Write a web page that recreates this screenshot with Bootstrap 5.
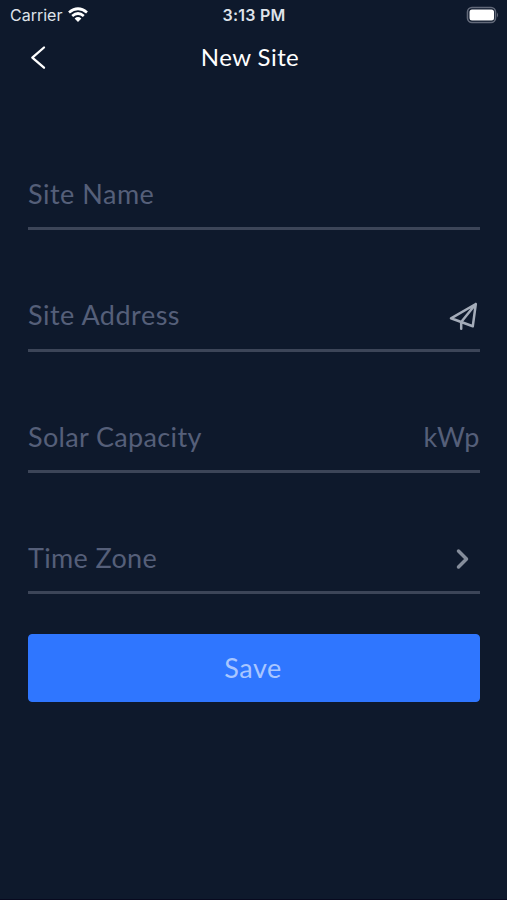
<!DOCTYPE html>
<html lang="en">
<head>
<meta charset="utf-8">
<meta name="viewport" content="width=device-width, initial-scale=1">
<title>New Site</title>
<link href="https://cdn.jsdelivr.net/npm/bootstrap@5.3.0/dist/css/bootstrap.min.css" rel="stylesheet">
<style>
body { background: #0e192c; font-family: Lato, sans-serif; color: #fff; }
.screen { height: 900px; border-bottom: 1px solid #08091f; }
.status-bar { height: 30px; padding: 0 8px 0 10px; font-family: Inter, sans-serif; font-size: 16px; line-height: 30px; color: #dfe3ea; }
.status-bar > div { flex: 1 1 0; }
.wifi { margin-left: 5px; }
.clock { font-weight: 600; letter-spacing: .25px; margin-left: -1px; }
.title-bar { height: 53px; padding: 0 35px 0 28px; }
.title-bar h1 { font-size: 24px; letter-spacing: .45px; line-height: 53px; }
.side { width: 20px; }
.site-form { padding: 63px 27px 0 28px; }
.field { height: 84.3px; margin-bottom: 37px; border-bottom: 3px solid #3c4558; font-size: 27px; color: #555f79; }
.field label { letter-spacing: .5px; line-height: 40px; margin-top: 15px; }
.field label.snug { letter-spacing: .35px; }
.save-btn { height: 68px; margin-top: 3px; border-radius: 4px; font-size: 27px; letter-spacing: .5px; padding-right: 14px; --bs-btn-bg: #2f76ff; --bs-btn-border-color: #2f76ff; --bs-btn-color: #a9c6ff; --bs-btn-padding-y: 0; }
</style>
<script src="https://cdn.jsdelivr.net/npm/bootstrap@5.3.0/dist/js/bootstrap.bundle.min.js"></script>
</head>
<body>
<div class="screen">
  <header>
    <div class="status-bar d-flex align-items-center">
      <div class="d-flex align-items-center">
        <span>Carrier</span>
        <svg class="wifi" width="22" height="16" viewBox="0 0 22 16" fill="none" stroke="#fff" stroke-width="2.7"><path d="M2 5.5Q11-2 20 5.5M5.2 9Q11 4 16.8 9"/><path d="M7.6 11.4Q11 8.6 14.4 11.4L11 15Z" fill="#fff" stroke="none"/></svg>
      </div>
      <span class="clock">3:13 PM</span>
      <div class="d-flex justify-content-end">
        <svg width="33" height="18" viewBox="0 0 33 18"><rect x="1.5" y="1.5" width="28" height="15" rx="4.5" fill="none" stroke="#626979" stroke-width="1.6"/><rect x="3.5" y="3.5" width="24.5" height="11" rx="2.5" fill="#fff"/><path d="M31 6.5Q33 9 31 11.5Z" fill="#626979"/></svg>
      </div>
    </div>
    <nav class="title-bar d-flex align-items-center justify-content-between" aria-label="Page">
      <a href="#" class="side d-flex" aria-label="Back"><svg width="20" height="26" viewBox="0 0 20 26" fill="none" stroke="#fff" stroke-width="2.3" stroke-linecap="round" stroke-linejoin="round"><path d="M16 3.5L4.3 13.6L16 23.7"/></svg></a>
      <h1 class="m-0 fw-normal">New Site</h1>
      <span class="side"></span>
    </nav>
  </header>
  <main class="site-form">
    <div class="field d-flex justify-content-between align-items-center"><label>Site Name</label></div>
    <div class="field d-flex justify-content-between align-items-center"><label>Site Address</label>
      <svg class="mt-3" width="31" height="30" viewBox="0 0 31 30" fill="none" stroke="#a4acb9" stroke-width="2.5" stroke-linejoin="round" stroke-linecap="round"><path d="M26.8 3L2 17.3L23.8 25.2ZM26.8 3L12.2 21V27.8"/></svg>
    </div>
    <div class="field d-flex justify-content-between align-items-center"><label class="snug">Solar Capacity</label><label>kWp</label></div>
    <div class="field d-flex justify-content-between align-items-center"><label class="snug">Time Zone</label>
      <svg class="mt-3 me-2" width="18" height="24" viewBox="0 0 18 24" fill="none" stroke="#858d9b" stroke-width="3.5" stroke-linecap="round" stroke-linejoin="round"><path d="M4.5 4L12.5 12L4.5 20"/></svg>
    </div>
    <button type="button" class="save-btn btn btn-primary w-100">Save</button>
  </main>
</div>
</body>
</html>
